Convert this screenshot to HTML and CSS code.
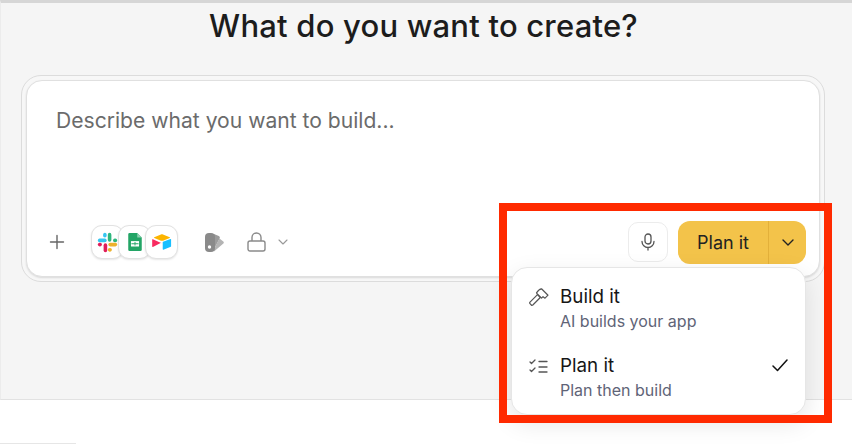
FILE: index.html
```html
<!DOCTYPE html>
<html lang="en">
<head>
    <meta charset="UTF-8">
    <title>What do you want to create?</title>
    <link rel="stylesheet" href="styles.css">
</head>
<body>
    <div class="page">
        <main class="main">
            <h1 class="title">What do you want to create?</h1>
            <div class="card-ring">
                <div class="card">
                    <div class="prompt">Describe what you want to build...</div>
                    <div class="toolbar">
                        <svg class="plus" width="16" height="16" viewBox="0 0 16 16" fill="none" stroke="#666" stroke-width="1.4" stroke-linecap="round"><path d="M8 1.5v13M1.5 8h13"/></svg>
                        <div class="apps">
                            <div class="app">
                                <svg width="21" height="21" viewBox="0 0 20 20" fill="none" stroke-width="3.4" stroke-linecap="round">
                                    <path stroke="#36c5f0" d="M2.5 8h5"/>
                                    <path stroke="#36c5f0" d="M7.5 2.5v1"/>
                                    <path stroke="#2eb67d" d="M12 2.5v5"/>
                                    <path stroke="#2eb67d" d="M17 8h.5"/>
                                    <path stroke="#ecb22e" d="M12.5 12h5"/>
                                    <path stroke="#ecb22e" d="M12 17h.5"/>
                                    <path stroke="#e01e5a" d="M8 12.500v5"/>
                                    <path stroke="#e01e5a" d="M2.500 12h.5"/>
                                </svg>
                            </div>
                            <div class="app">
                                <svg width="14" height="18" viewBox="0 0 15 20">
                                    <path fill="#23a566" d="M1.500 0H10l5 5v13.500a1.500 1.500 0 0 1-1.500 1.500h-12A1.500 1.500 0 0 1 0 18.500v-17A1.500 1.500 0 0 1 1.500 0z"/>
                                    <path fill="#8ed1b1" d="M10 0l5 5h-5z"/>
                                    <path fill="#fff" d="M3 9h9v6H3z"/>
                                    <path fill="#23a566" d="M7 10h1v4H7zM3.500 11.500h8v1h-8z"/>
                                </svg>
                            </div>
                            <div class="app">
                                <svg width="20" height="18" viewBox="0 0 22 19">
                                    <path fill="#fcb400" d="M9.800 1.200L2.500 4.200c-.4.2-.4.700 0 .9l7.400 2.900c.7.300 1.500.300 2.200 0l7.400-2.900c.4-.2.400-.7 0-.9l-7.400-3c-.7-.3-1.600-.3-2.300 0z"/>
                                    <path fill="#18bfff" d="M11.800 9.800v7.600c0 .4.400.6.700.5l8.200-3.200c.2-.1.300-.3.300-.5V6.600c0-.4-.4-.6-.7-.5l-8.200 3.200c-.2.100-.3.300-.3.500z"/>
                                    <path fill="#f82b60" d="M10 10.200L1 14.900c-.4.200-.8-.1-.8-.5V7c0-.2.100-.3.200-.4.100-.1.200-.1.300-.1.100 0 .2 0 .3.100l9 3.900c.3.100.3.500 0 .7z"/>
                                </svg>
                            </div>
                        </div>
                        <svg class="palette" width="19" height="19" viewBox="0 0 19 19">
                            <path fill="#b4b4b4" d="M14.500 5.600l3.800 3c.7.500.7 1.400.1 1.900L9 18.500V16z"/>
                            <path fill="#9c9c9c" d="M9 1l4.800 2c1 .4 1.300 1.400.9 2.300L9 16z"/>
                            <rect fill="#8a8a8a" x="0" y="0" width="10" height="19" rx="4"/>
                            <circle cx="4.500" cy="14" r="1.700" fill="#fff"/>
                        </svg>
                        <svg class="lock" width="19" height="20" viewBox="0 0 19 20" fill="none" stroke="#8a8a8a" stroke-width="1.400">
                            <rect x="1" y="9" width="17" height="10" rx="2"/>
                            <path d="M5 9V5.500a4.500 4.500 0 0 1 9 0V9"/>
                        </svg>
                        <svg class="lock-caret" width="10" height="6" viewBox="0 0 10 6" fill="none" stroke="#999" stroke-width="1.100" stroke-linecap="round" stroke-linejoin="round"><path d="M1 1l4 4 4-4"/></svg>
                        <div class="toolbar-right">
                            <div class="mic">
                                <svg width="14" height="18" viewBox="0 0 14 18" fill="none" stroke="#555" stroke-width="1.300" stroke-linecap="round">
                                    <rect x="4" y="1" width="6" height="10" rx="3"/>
                                    <path d="M1 8.500a6 6 0 0 0 12 0M7 14.500V17"/>
                                </svg>
                            </div>
                            <div class="plan-btn">
                                <span class="plan-label">Plan it</span>
                                <span class="plan-caret">
                                    <svg width="12" height="7" viewBox="0 0 12 7" fill="none" stroke="#222" stroke-width="1.400" stroke-linecap="round" stroke-linejoin="round"><path d="M1 1l5 5 5-5"/></svg>
                                </span>
                            </div>
                        </div>
                    </div>
                </div>
            </div>
        </main>
        <footer class="footer"></footer>
    </div>

    <div class="menu">
        <div class="menu-item">
            <svg class="menu-icon" width="20" height="18" viewBox="0 0 20 18" fill="none" stroke="#555" stroke-width="1.200" stroke-linejoin="round">
                <path d="M1 14.200L8.500 6.700l2.800 2.800-7.500 7.500c-.5.400-1.100.400-1.500 0L1 15.700c-.4-.4-.4-1 0-1.500z"/>
                <path d="M7.500 4.800C9 2.500 10.500 1 12.500.8L19 7.200l-3 3-2-1.500-1.400 1.400-4.600-4.400z"/>
            </svg>
            <div class="menu-text">
                <div class="menu-title">Build it</div>
                <div class="menu-sub">AI builds your app</div>
            </div>
        </div>
        <div class="menu-item">
            <svg class="menu-icon" width="20" height="20" viewBox="0 0 20 20" fill="none" stroke="#555" stroke-width="1.300" stroke-linecap="round" stroke-linejoin="round">
                <path d="M1 5l1.500 1.500L6 3M1 13l1.500 1.500L6 11"/>
                <path d="M10 4.500h8M10 10h8M10 15h8"/>
            </svg>
            <div class="menu-text">
                <div class="menu-title">Plan it</div>
                <div class="menu-sub">Plan then build</div>
            </div>
            <svg class="menu-check" width="16" height="13" viewBox="0 0 16 13" fill="none" stroke="#111" stroke-width="1.500" stroke-linecap="round" stroke-linejoin="round"><path d="M1 7l4.500 4.500L15 1"/></svg>
        </div>
    </div>
    <div class="highlight"></div>
    <div class="corner-line"></div>
</body>
</html>
```
FILE: styles.css
```css
* {
    box-sizing: border-box;
}
html, body {
    margin: 0;
    height: 100%;
    overflow: hidden;
}
body {
    font-family: Inter, "Liberation Sans", sans-serif;
    background-color: #fff;
    color: #1a1a1a;
}
.page {
    display: flex;
    flex-direction: column;
    height: 444px;
}
.main {
    height: 400px;
    padding: 0 27px 0 21px;
    background-color: #f5f5f5;
    border-top: 3px solid #d6d6d6;
    border-bottom: 1px solid #e2e2e2;
    border-left: 1px solid #ececec;
}
.title {
    margin: 5px 0 0;
    height: 49px;
    font-size: 31px;
    line-height: 36px;
    font-weight: 500;
    letter-spacing: 0.2px;
    text-align: center;
    color: #1c1c1c;
}
.card-ring {
    margin: 18px 0 0 -1px;
    padding: 4px;
    width: 804px;
    height: 207px;
    border: 1px solid #dcdcdc;
    border-radius: 20px;
    background-color: #f7f7f7;
}
.card {
    display: flex;
    flex-direction: column;
    height: 197px;
    padding: 28px 13px 12px 30px;
    background-color: #fff;
    border: 1px solid #e0e0e0;
    border-radius: 16px;
    box-shadow: 0 1px 2px rgba(0, 0, 0, 0.12);
}
.prompt {
    font-size: 21.100px;
    line-height: 24px;
    color: #6b6b6b;
    margin-left: -1px;
}
.toolbar {
    display: flex;
    align-items: center;
    margin-top: auto;
    margin-left: -8px;
    height: 44px;
}
.plus {
    flex: none;
}
.apps {
    display: flex;
    margin-left: 26px;
}
.app {
    display: flex;
    align-items: center;
    justify-content: center;
    width: 33px;
    height: 34px;
    background-color: #fff;
    border: 1px solid #e2e2e2;
    border-radius: 11px;
    box-shadow: 0 1px 2px rgba(0, 0, 0, 0.1);
}
.app + .app {
    margin-left: -6px;
}
.palette {
    margin-left: 27px;
}
.lock {
    margin-left: 23px;
}
.lock-caret {
    margin-left: 12px;
}
.toolbar-right {
    display: flex;
    align-items: center;
    margin-left: auto;
}
.mic {
    display: flex;
    align-items: center;
    justify-content: center;
    width: 40px;
    height: 40px;
    border: 1px solid #ececec;
    border-radius: 10px;
}
.plan-btn {
    display: flex;
    height: 43px;
    width: 128px;
    margin-left: 10px;
    background-color: #f3c34a;
    border-radius: 12px;
    font-size: 18px;
    color: #222;
}
.plan-label {
    display: flex;
    align-items: center;
    justify-content: center;
    width: 91px;
    border-right: 1px solid #e3b03a;
}
.plan-caret {
    display: flex;
    align-items: center;
    justify-content: center;
    flex: 1;
}
.menu {
    position: absolute;
    left: 511px;
    top: 267px;
    width: 295px;
    height: 148px;
    padding: 7px 0 0 17px;
    background-color: #fff;
    border: 1px solid #e6e6e6;
    border-radius: 16px;
    box-shadow: 0 8px 24px rgba(0, 0, 0, 0.1);
}
.menu-item {
    display: flex;
    align-items: flex-start;
    height: 69px;
    padding-right: 17px;
}
.menu-icon {
    flex: none;
    margin-top: 13px;
}
.menu-text {
    margin-left: 11px;
    flex: 1;
}
.menu-title {
    font-size: 18.800px;
    line-height: 24px;
    margin-top: 10px;
    color: #161616;
}
.menu-sub {
    font-size: 16px;
    line-height: 20px;
    margin-top: 2px;
    color: #5f6477;
}
.menu-check {
    margin-top: 15px;
}
.highlight {
    position: absolute;
    left: 499px;
    top: 203px;
    width: 333px;
    height: 220px;
    border: 8px solid #ff2a00;
}
.corner-line {
    position: absolute;
    left: 0;
    bottom: 0;
    width: 76px;
    height: 1px;
    background-color: #e6e6e6;
}
```
